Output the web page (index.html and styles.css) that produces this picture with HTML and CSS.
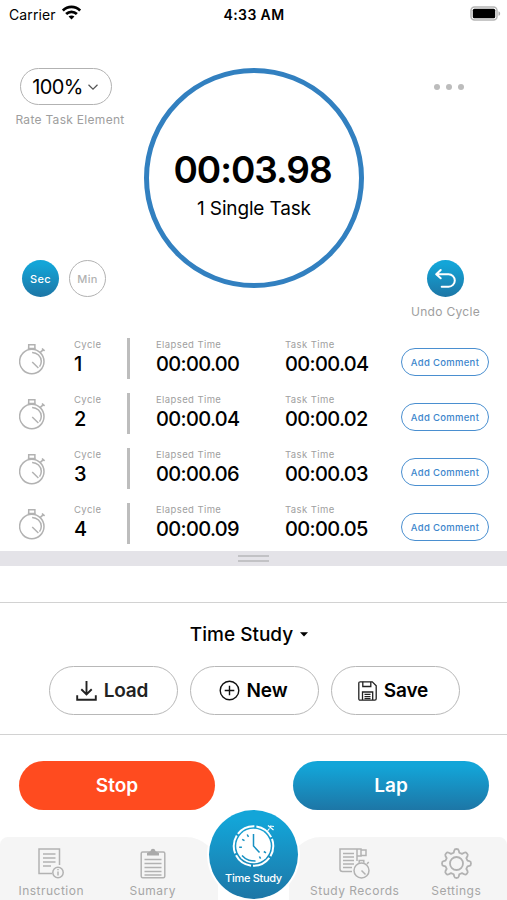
FILE: index.html
```html
<!DOCTYPE html>
<html lang="en">
<head>
    <meta charset="UTF-8">
    <meta name="viewport" content="width=device-width, initial-scale=1.0">
    <title>Time Study</title>
    <link rel="stylesheet" href="styles.css">
</head>
<body>
    <!-- shared icons -->
    <svg class="sprite" width="0" height="0">
        <symbol id="stopwatch" viewBox="0 0 28 32">
            <g fill="none" stroke="#b2b2b2" stroke-width="1.5">
                <circle cx="12.800" cy="18.500" r="12.200"/>
                <path d="M9.700 6.500V1.700h6.200v4.800M8.800 5.600h8"/>
                <path d="M13.100 9.400c5 .2 9 4 9.200 8.800c0 2.200-.7 4-1.800 5.400M13.200 19l6.200 6"/>
                <path d="M21.300 9.300l2.800-2.500M23 5.500l2.600 2.400" stroke-width="1.600"/>
            </g>
        </symbol>
    </svg>

    <div class="app">
        <div class="status-bar">
            <div class="carrier">
                <span>Carrier</span>
                <svg width="19" height="15" viewBox="0 0 18 14" fill="none" stroke="#000" stroke-width="2.600">
                    <path d="M.8 5.100C5.400.5 12.600.5 17.200 5.100"/>
                    <path d="M3.900 8.400c2.900-2.800 7.300-2.800 10.200 0"/>
                    <path d="M9 13.700L6.200 10.900c1.500-1.500 4.100-1.500 5.600 0z" fill="#000" stroke="none"/>
                </svg>
            </div>
            <span class="clock">4:33 AM</span>
            <svg class="battery" width="31" height="15" viewBox="0 0 31 15">
                <rect x="1" y="1" width="26" height="13" rx="3.500" fill="#fff" stroke="#b5b5b5" stroke-width="1.500"/>
                <rect x="2.800" y="2.800" width="22.400" height="9.400" rx="1.500"/>
                <path d="M28.500 5.200c2.200.8 2.200 3.800 0 4.600z" fill="#aaa"/>
            </svg>
        </div>

        <div class="header">
            <div class="side left">
                <div class="rate">
                    <button class="rate-button">100%
                        <svg width="10" height="6" viewBox="0 0 10 6" fill="none" stroke="#555" stroke-width="1.200"><path d="M.5.7L5 5.100 9.500.7"/></svg>
                    </button>
                    <span class="caption rate-caption">Rate Task Element</span>
                </div>
                <div class="units">
                    <button class="unit active">Sec</button>
                    <button class="unit">Min</button>
                </div>
            </div>
            <div class="timer">
                <div class="timer-value">00:03.98</div>
                <div class="timer-task">1 Single Task</div>
            </div>
            <div class="side right">
                <div class="dots"><i></i><i></i><i></i></div>
                <div class="undo">
                    <button class="undo-button">
                        <svg width="22" height="22" viewBox="0 0 22 22" fill="none" stroke="#fff" stroke-width="2" stroke-linecap="round" stroke-linejoin="round"><path d="M6.700 2L2.200 6.300l4.500 4M2.600 6.300h12a6.200 6.200 0 0 1 0 12.400H7.700"/></svg>
                    </button>
                    <span class="caption undo-caption">Undo Cycle</span>
                </div>
            </div>
        </div>

        <div class="cycles">
            <div class="cycle">
                <svg class="watch"><use href="#stopwatch"/></svg>
                <div class="cell number"><small>Cycle</small><b>1</b></div>
                <div class="cell elapsed"><small>Elapsed Time</small><b>00:00.00</b></div>
                <div class="cell task"><small>Task Time</small><b>00:00.04</b></div>
                <button class="comment">Add Comment</button>
            </div>
            <div class="cycle">
                <svg class="watch"><use href="#stopwatch"/></svg>
                <div class="cell number"><small>Cycle</small><b>2</b></div>
                <div class="cell elapsed"><small>Elapsed Time</small><b>00:00.04</b></div>
                <div class="cell task"><small>Task Time</small><b>00:00.02</b></div>
                <button class="comment">Add Comment</button>
            </div>
            <div class="cycle">
                <svg class="watch"><use href="#stopwatch"/></svg>
                <div class="cell number"><small>Cycle</small><b>3</b></div>
                <div class="cell elapsed"><small>Elapsed Time</small><b>00:00.06</b></div>
                <div class="cell task"><small>Task Time</small><b>00:00.03</b></div>
                <button class="comment">Add Comment</button>
            </div>
            <div class="cycle">
                <svg class="watch"><use href="#stopwatch"/></svg>
                <div class="cell number"><small>Cycle</small><b>4</b></div>
                <div class="cell elapsed"><small>Elapsed Time</small><b>00:00.09</b></div>
                <div class="cell task"><small>Task Time</small><b>00:00.05</b></div>
                <button class="comment">Add Comment</button>
            </div>
        </div>

        <div class="handle"><i></i><i></i></div>

        <div class="study">
            <div class="study-title">Time Study
                <svg width="8" height="5" viewBox="0 0 8 5"><path d="M0 .3h8L4 4.500z"/></svg>
            </div>
            <div class="study-buttons">
                <button class="file-button load">
                    <svg width="21" height="20" viewBox="0 0 21 20" fill="none" stroke="#222" stroke-width="1.900"><path d="M10.500 0v13M5.300 8.300l5.200 5.100 5.200-5.100M1.200 14.300v4.500h18.600v-4.500"/></svg>
                    Load
                </button>
                <button class="file-button">
                    <svg width="21" height="21" viewBox="0 0 21 21" fill="none" stroke="#111" stroke-width="1.400"><circle cx="10.500" cy="10.500" r="9.300"/><path d="M10.500 5.700v9.600M5.700 10.500h9.600"/></svg>
                    New
                </button>
                <button class="file-button save">
                    <svg width="19" height="20" viewBox="0 0 19 20" fill="none" stroke="#222" stroke-width="1.300">
                        <path d="M2 .8h12.300l3.900 3.900v13.100q0 1.400-1.400 1.400H2.200Q.8 19.200.8 17.800V2.200Q.8.800 2.200.8z"/>
                        <path d="M4.800.8v4.700h8V.8M4.500 19v-8h10.200v8M6.500 13.400h6M6.500 15.600h6M6.500 17.600h6"/>
                    </svg>
                    Save
                </button>
            </div>
        </div>

        <div class="actions">
            <button class="action stop">Stop</button>
            <button class="action lap">Lap</button>
        </div>

        <div class="tabs">
            <div class="tab-group first">
                <div class="tab">
                    <svg width="26" height="31" viewBox="0 0 26 31" fill="none" stroke="#b2b2b2" stroke-width="1.500">
                        <path d="M14 25.500H1V1h20.500v16M5 6h12.500M5 10h12.500M5 14h12.500M5 18h8"/>
                        <circle cx="20" cy="24.500" r="5.200"/><path d="M20 23.500v4M20 21v1.200"/>
                    </svg>
                    <span>Instruction</span>
                </div>
                <div class="tab">
                    <svg width="26" height="31" viewBox="0 0 26 31" fill="none" stroke="#b2b2b2" stroke-width="1.500">
                        <rect x="1.200" y="4" width="23.600" height="25.800" rx="1.500"/>
                        <path d="M4.500 11.500h17M4.500 15.500h17M4.500 19.500h17M4.500 23.500h17M4.500 27h17" stroke-width="1.300"/>
                        <path d="M7 7.500V5l3.500-1.700C11 0 15 0 15.500 3.300L19 5v2.500z" fill="#aaa" stroke="none"/>
                    </svg>
                    <span>Sumary</span>
                </div>
            </div>
            <div class="tab-current">
                <svg width="46" height="44" viewBox="0 0 46 44">
                    <circle cx="22.500" cy="22" r="17.300" fill="#fff"/>
                    <circle cx="22.500" cy="22" r="19.800" fill="none" stroke="#fff" stroke-width="2" stroke-dasharray="18.700 2.034" stroke-dashoffset="8"/>
                    <g fill="none" stroke="#1791c3" stroke-width="1.500">
                        <path d="M22.500 10v12l6 6.500M11 31.500c5 5.500 9 5.500 13.500 5.500M16.200 10.500l1.300 2.400M11.200 15.300l2.300 1.400M8.200 23.300h2.700M28.400 32.500l1.200 2.200M32.800 27.500l2.200 1.300"/>
                    </g>
                    <path d="M37 1.500l5.500 4.500M38.500 4.500l-2 2.500M39 2l4 .500" stroke="#fff" fill="none" stroke-width="1.200"/>
                </svg>
                <span>Time Study</span>
            </div>
            <div class="tab-group last">
                <div class="tab">
                    <svg width="31" height="31" viewBox="0 0 31 31" fill="none" stroke="#b2b2b2" stroke-width="1.500">
                        <path d="M13 23.500H3.500Q1 23.500 1 21V1h17v12M4 5.500h11M4 9h11M4 12.500h11M4 16h11M4 19.500h9M18 1h4v7h-4M22 2h5v5.500h-5"/>
                        <circle cx="22.500" cy="22.500" r="7.500"/><path d="M22.500 22.500l4 4M20.200 14.700V12.500h4.600v2.200M28 16l1.700-1.900"/>
                    </svg>
                    <span>Study Records</span>
                </div>
                <div class="tab">
                    <svg width="31" height="31" viewBox="0 0 31 31" fill="none" stroke="#b2b2b2" stroke-width="1.800" stroke-linejoin="round">
                        <path d="M13.200 2.600Q13.500 1 15.500 1t2.300 1.600l.5 2.100 2.700 1.200 2.200-1.200q1.500-.8 2.700.6 1.300 1.300.6 2.700L25.300 10.200l1.200 2.500 2 .5Q30 13.500 30 15.500t-1.500 2.300l-2 .5-1.200 2.500 1.200 2.200q.7 1.400-.6 2.700-1.200 1.400-2.700.6L21 25.100l-2.700 1.200-.5 2.100Q17.500 30 15.500 30t-2.300-1.600l-.5-2.100L10 25.100l-2.200 1.200q-1.500.8-2.700-.6-1.300-1.300-.6-2.700l1.200-2.200-1.200-2.500-2-.5Q1 17.500 1 15.500t1.500-2.300l2-.5 1.200-2.500L4.500 8q-.7-1.400.6-2.700 1.200-1.400 2.700-.6L10 5.900l2.700-1.200z"/>
                        <circle cx="15.500" cy="15.500" r="6.500"/>
                    </svg>
                    <span>Settings</span>
                </div>
            </div>
        </div>
    </div>
</body>
</html>
```
FILE: styles.css
```css
* {
    box-sizing: border-box;
}
body {
    margin: 0;
    background: #fff;
    color: #000;
    font-family: Inter, "Liberation Sans", sans-serif;
}
button {
    font-family: inherit;
    padding: 0;
    background: #fff;
    color: #000;
    display: flex;
    align-items: center;
    justify-content: center;
}
svg {
    display: block;
    flex: none;
}
.sprite {
    position: absolute;
}
.app {
    width: 507px;
    height: 900px;
    display: flex;
    flex-direction: column;
    overflow: hidden;
}

/* status bar */
.status-bar {
    height: 28px;
    flex: none;
    display: grid;
    grid-template-columns: 1fr auto 1fr;
    align-items: center;
    padding: 0 6px 0 9px;
    font-size: 14px;
    letter-spacing: 0.1px;
}
.carrier {
    display: flex;
    align-items: center;
    gap: 6px;
}
.carrier svg {
    margin-top: -3px;
}
.clock {
    font-weight: 600;
    letter-spacing: 0.4px;
    margin-left: -2px;
}
.battery {
    justify-self: end;
    margin-top: -1px;
}

/* timer */
.header {
    height: 303px;
    flex: none;
    display: flex;
    padding: 40px 0 11px;
}
.side {
    width: 144px;
    flex: none;
    display: flex;
    flex-direction: column;
    justify-content: space-between;
}
.rate {
    width: 140px;
    display: flex;
    flex-direction: column;
    align-items: center;
    gap: 7px;
}
.rate-button {
    width: 92px;
    height: 37px;
    margin-right: 8px;
    padding-right: 2px;
    border: 1.5px solid #b2b2b2;
    border-radius: 19px;
    font-size: 20px;
    letter-spacing: -0.6px;
    gap: 5px;
}
.caption {
    font-size: 12px;
    line-height: 16px;
    color: #9e9e9e;
    letter-spacing: 0.3px;
    white-space: nowrap;
}
.units {
    display: flex;
    gap: 10px;
    padding: 0 0 23px 22px;
}
.unit {
    width: 37px;
    height: 37px;
    border: 1.5px solid #b2b2b2;
    border-radius: 50%;
    font-size: 11px;
    font-weight: 500;
    letter-spacing: 0.3px;
    color: #b2b2b2;
}
.unit.active,
.undo-button,
.lap,
.tab-current {
    border: none;
    color: #fff;
    background: linear-gradient(#13a5d8 10%, #1d76a6);
}
.timer {
    width: 220px;
    height: 220px;
    flex: none;
    border: 5px solid #3280c0;
    border-radius: 50%;
    text-align: center;
    padding-top: 74px;
}
.timer-value {
    font-size: 37px;
    font-weight: 600;
    line-height: 46px;
    letter-spacing: -1.05px;
    margin-left: -3px;
}
.timer-task {
    font-size: 19px;
    line-height: 31px;
    letter-spacing: -0.15px;
}
.side.right {
    align-items: center;
    padding-left: 19px;
}
.dots {
    display: flex;
    gap: 6px;
    margin: 16px 0 0 6px;
}
.dots i {
    width: 6px;
    height: 6px;
    border-radius: 50%;
    background: #bcbcbc;
}
.undo {
    display: flex;
    flex-direction: column;
    align-items: center;
    gap: 7px;
}
.undo-button {
    width: 37px;
    height: 37px;
    border-radius: 50%;
}

/* cycle list */
.cycles {
    flex: none;
}
.cycle {
    height: 55px;
    display: grid;
    grid-template-columns: 55px 56px 129px 142px 88px;
    align-items: center;
    padding: 0 0 1px 19px;
}
.watch {
    width: 28px;
    height: 32px;
    margin-top: 1px;
}
.cell {
    height: 41px;
    display: flex;
    flex-direction: column;
}
.number {
    border-right: 3px solid #bdbdbd;
}
.elapsed,
.task {
    padding-left: 26px;
}
.cell small {
    font-size: 9.5px;
    line-height: 14px;
    letter-spacing: 0.4px;
    color: #a0a0a0;
    white-space: nowrap;
}
.cell b {
    font-size: 20px;
    font-weight: 500;
    line-height: 25px;
    letter-spacing: -0.65px;
}
.comment {
    height: 28px;
    margin: 8px 0 0;
    border: 1.5px solid #4a8fd0;
    border-radius: 14px;
    color: #3d86cc;
    font-size: 9.5px;
    font-weight: 500;
    letter-spacing: 0.3px;
    white-space: nowrap;
}
.handle {
    height: 15px;
    flex: none;
    background: #e4e3e8;
    display: flex;
    flex-direction: column;
    align-items: center;
    justify-content: center;
    gap: 3px;
}
.handle i {
    width: 31px;
    height: 2px;
    background: #c2c2c5;
}

/* study file */
.study {
    height: 133px;
    flex: none;
    margin-top: 36px;
    border-top: 1px solid #d2d2d2;
    border-bottom: 1px solid #d2d2d2;
}
.study-title {
    height: 63px;
    display: flex;
    align-items: center;
    justify-content: center;
    gap: 7px;
    padding-right: 9px;
    font-size: 19px;
    font-weight: 500;
}
.study-buttons {
    display: flex;
    justify-content: center;
    gap: 12px;
    padding-left: 1px;
}
.file-button {
    width: 129px;
    height: 49px;
    border: 1.5px solid #b8b8b8;
    border-radius: 25px;
    padding-right: 2px;
    gap: 7px;
    font-size: 19px;
    font-weight: 600;
    letter-spacing: -0.15px;
}
.file-button.load {
    color: #222;
}
.file-button.save {
    padding-right: 4px;
}

/* start and stop */
.actions {
    display: flex;
    justify-content: space-between;
    padding: 26px 18px 0 19px;
    flex: none;
}
.action {
    width: 196px;
    height: 49px;
    border: none;
    border-radius: 25px;
    color: #fff;
    font-size: 19px;
    font-weight: 600;
}
.stop {
    background: #ff4b1f;
}

/* tab bar */
.tabs {
    height: 63px;
    margin-top: auto;
    flex: none;
    display: flex;
    align-items: flex-end;
    justify-content: space-between;
}
.tab-group {
    width: 218px;
    height: 63px;
    flex: none;
    display: grid;
    grid-template-columns: 1fr 1fr;
    background: #f5f5f5;
}
.first {
    padding-right: 15px;
    border-radius: 8px 32px 0 0;
}
.last {
    padding-left: 15px;
    border-radius: 32px 8px 0 0;
}
.tab {
    display: flex;
    flex-direction: column;
    align-items: center;
    padding-top: 11px;
    gap: 3px;
    font-size: 12px;
    line-height: 17px;
    letter-spacing: 0.5px;
    color: #a6a6a6;
    white-space: nowrap;
}
.first .tab {
    padding-left: 1px;
}
.tab-current {
    width: 89px;
    height: 89px;
    flex: none;
    margin: 0 -9px 1px;
    z-index: 1;
    border-radius: 50%;
    box-shadow: 0 0 0 2px #fff;
    display: flex;
    flex-direction: column;
    align-items: center;
    padding-top: 14px;
    gap: 1px;
    font-size: 11px;
    line-height: 18px;
    font-weight: 500;
    letter-spacing: -0.3px;
}
```
